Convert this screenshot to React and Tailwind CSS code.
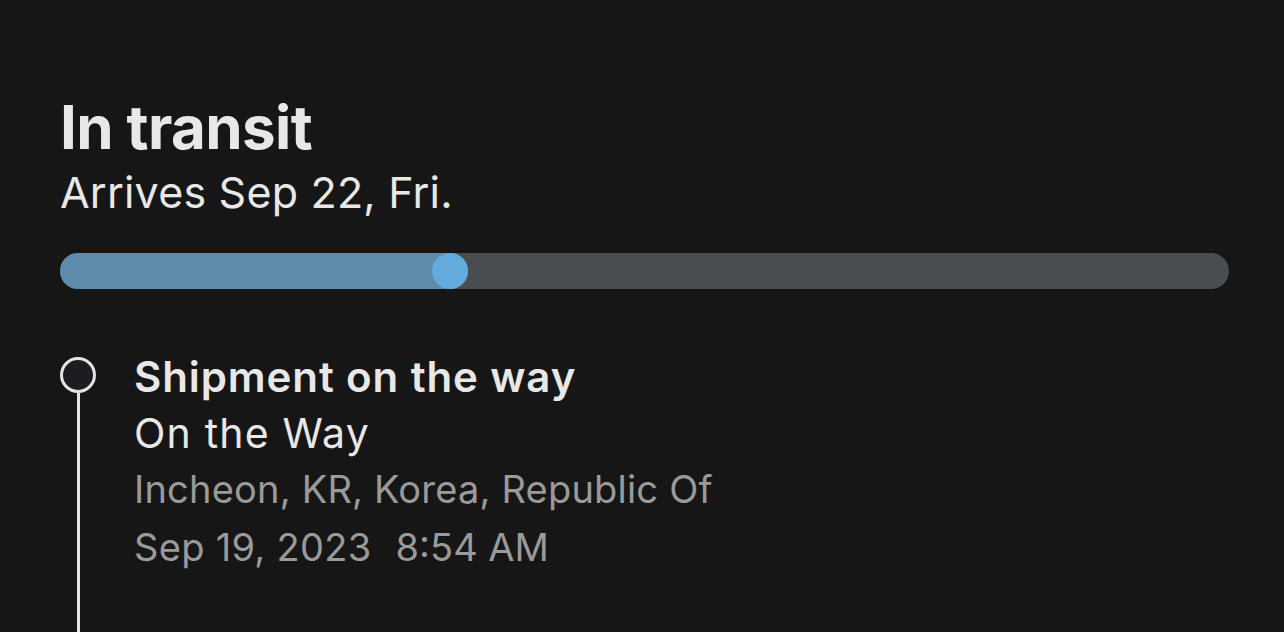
export default function App() {
  return (
    <div className="w-[1284px] h-[632px] overflow-hidden bg-[#161616] flex flex-col" style={{ fontFamily: 'Inter, "Noto Sans", sans-serif' }}>
      <div className="h-[2px] bg-[#1e1e20]" />
      <div className="h-[3px] bg-[#2b2b2d]" />
      <div className="pl-[60px] pr-[55px] pt-[91px]">
        <h1 className="text-[60px] leading-[72px] font-bold text-[#e8e8e8] tracking-[-0.6px]">In transit</h1>
        <p className="text-[43px] leading-[52px] text-[#e8e8e8] mt-[3px] tracking-[0.2px]">Arrives Sep 22, Fri.</p>
        <div className="mt-[35px] h-[36px] rounded-full bg-[#4a4d50] relative">
          <div className="h-full w-[408px] rounded-full bg-[#5e8bab]" />
          <div className="absolute top-0 left-[372px] w-[36px] h-[36px] rounded-full bg-[#63aadd]" />
        </div>
        <div className="mt-[68px] flex">
          <div className="w-[36px] flex flex-col items-center shrink-0">
            <div className="w-[36px] h-[36px] rounded-full border-[3px] border-[#e4e4e4] bg-[#1c1d20]" />
            <div className="w-[3px] h-[300px] bg-[#e4e4e4]" />
          </div>
          <div className="ml-[38px] -mt-[8px] flex flex-col">
            <div className="text-[42px] leading-[56px] font-semibold text-[#e8e8e8] tracking-[0.9px]">Shipment on the way</div>
            <div className="text-[41px] leading-[56px] text-[#e8e8e8] tracking-[1.2px]">On the Way</div>
            <div className="text-[38px] leading-[56px] text-[#9a9a9a] tracking-[0.2px]">Incheon, KR, Korea, Republic Of</div>
            <div className="text-[38px] leading-[60px] text-[#9a9a9a] flex">
              <span className="tracking-[0.3px]">Sep 19, 2023</span>
              <span className="ml-[24px]">8:54 AM</span>
            </div>
          </div>
        </div>
      </div>
    </div>
  );
}
